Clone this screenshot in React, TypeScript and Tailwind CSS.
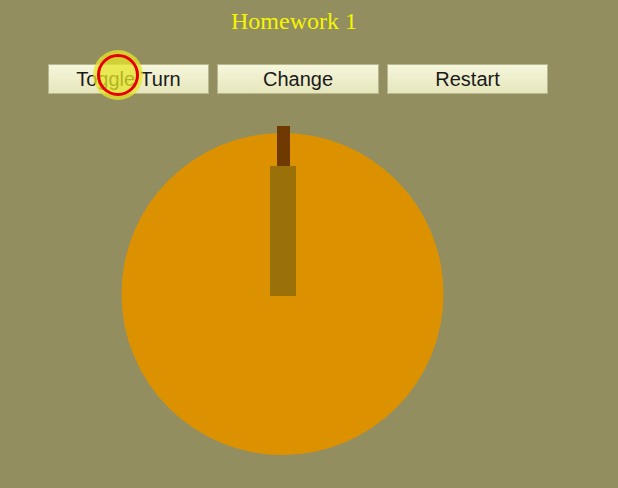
import { useState } from "react"

export default function App() {
  const [turn, setTurn] = useState(0)

  return (
    <div className="relative w-[618px] h-[488px] overflow-hidden bg-[#928e60] font-['Liberation_Sans',Arial,sans-serif]">
      {/* Title */}
      <h1 className="pt-[8px] text-center text-[24px] leading-[27px] text-[#f5f500] font-['Liberation_Serif','Times_New_Roman',serif]">
        <span className="relative left-[-15px]">Homework 1</span>
      </h1>

      {/* Buttons */}
      <div className="flex gap-2 pl-[48px] mt-[29px]">
        <button
          onClick={() => setTurn((t) => t + 1)}
          className="w-[161px] h-[30px] border border-[#b8b890] bg-gradient-to-b from-[#f6f6dc] to-[#e6e6bc] text-[20px] leading-none text-[#1a1a1a]"
        >
          Toggle Turn
        </button>
        <button className="w-[162px] h-[30px] border border-[#b8b890] bg-gradient-to-b from-[#f6f6dc] to-[#e6e6bc] text-[20px] leading-none text-[#1a1a1a]">
          Change
        </button>
        <button className="w-[161px] h-[30px] border border-[#b8b890] bg-gradient-to-b from-[#f6f6dc] to-[#e6e6bc] text-[20px] leading-none text-[#1a1a1a]">
          Restart
        </button>
      </div>

      {/* Canvas drawing */}
      <svg width="618" height="394" viewBox="0 94 618 394" className="block">
        <circle cx="282.5" cy="294" r="161" fill="#dc9200" />
        <g transform={`rotate(${turn * 15} 282.5 294)`}>
          <rect x="277" y="126" width="13" height="41" fill="#6e3a02" />
          <rect x="270" y="166" width="26" height="130" fill="#9a7008" />
        </g>
      </svg>

      {/* Cursor highlight */}
      <div className="absolute left-[93px] top-[50px] w-[50px] h-[50px] rounded-full bg-[#e6e628]/75 flex items-center justify-center pointer-events-none">
        <div className="w-[42px] h-[42px] rounded-full border-[3px] border-[#e80000]" />
      </div>
    </div>
  )
}
